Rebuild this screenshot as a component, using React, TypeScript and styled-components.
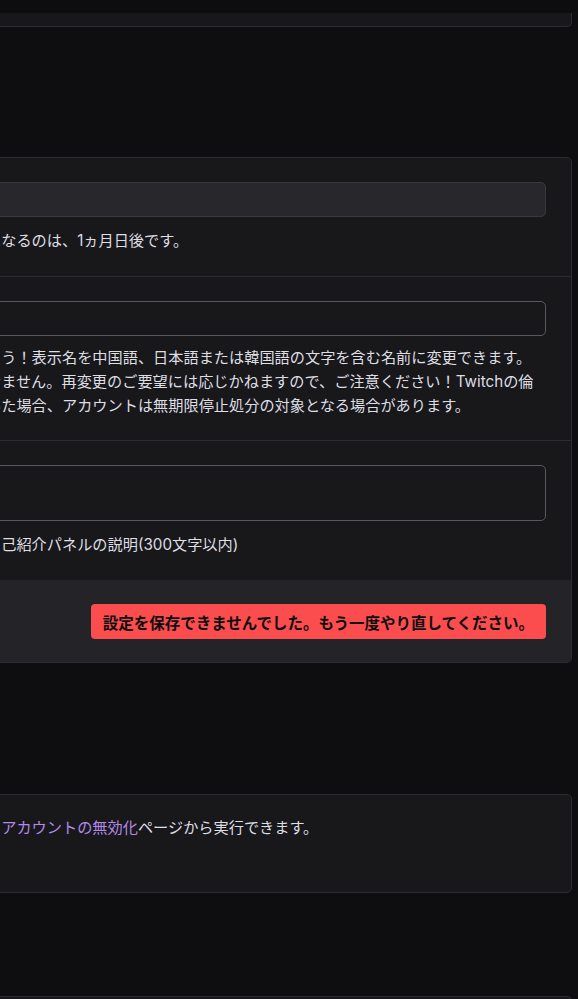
import React from "react";
import styled, { createGlobalStyle } from "styled-components";

const GlobalStyle = createGlobalStyle`
  html, body {
    margin: 0;
    padding: 0;
    background: #0e0e10;
    overflow: hidden;
  }
  body {
    font-family: Inter, "Noto Sans CJK JP", "Noto Sans", sans-serif;
    color: #dedee3;
    -webkit-font-smoothing: antialiased;
  }
`;

const Page = styled.div`
  width: 578px;
  height: 999px;
  overflow: hidden;
`;

/* the settings column runs wider than the window on its left side */
const Column = styled.div`
  margin-left: -40px;
  width: 612px;
  display: flex;
  flex-direction: column;
`;

const TopStrip = styled.div`
  height: 13px;
  background: #0d0d0f;
`;

const CardTail = styled.div`
  height: 13px;
  background: #18181b;
  border: 1px solid #2b2b31;
  border-top: none;
  border-radius: 0 0 5px 5px;
`;

const Card = styled.section<{ $gap: number }>`
  margin-top: ${(p) => p.$gap}px;
  background: #18181b;
  border: 1px solid #2b2b31;
  border-radius: 5px;
  overflow: hidden;
`;

const Row = styled.div<{ $gap: number; $bottom: number }>`
  display: flex;
  flex-direction: column;
  gap: ${(p) => p.$gap}px;
  padding: 24px 25px ${(p) => p.$bottom}px;
  & + & {
    border-top: 1px solid #2c2c32;
  }
`;

const Field = styled.div<{ $disabled?: boolean; $tall?: boolean }>`
  box-sizing: border-box;
  height: ${(p) => (p.$tall ? 56 : 35)}px;
  border-radius: 5px;
  background: ${(p) => (p.$disabled ? "#27272c" : "#18181b")};
  border: 1px solid ${(p) => (p.$disabled ? "#38383e" : "#57575f")};
`;

const Help = styled.p`
  margin: 0;
  font-size: 15.2px;
  line-height: 24px;
  color: #dedee3;
  white-space: nowrap;
`;

const Footer = styled.div`
  display: flex;
  justify-content: flex-end;
  padding: 24px 25px 23px;
  background: #232328;
`;

const ErrorNotice = styled.div`
  display: inline-flex;
  align-items: center;
  height: 35px;
  padding: 0 12px;
  border-radius: 4px;
  background: #fb4d4d;
  color: #0e0e10;
  font-size: 15.5px;
  font-weight: 700;
  white-space: nowrap;
`;

const InfoBody = styled.div`
  min-height: 52px;
  padding: 21px 25px 24px;
`;

const Link = styled.a`
  color: #b38ae9;
  text-decoration: none;
`;

const NextCard = styled.div`
  margin-top: 103px;
  height: 20px;
  background: #18181b;
  border: 1px solid #2b2b31;
  border-bottom: none;
  border-radius: 5px 5px 0 0;
`;

export default function App() {
  return (
    <>
      <GlobalStyle />
      <Page>
        <TopStrip />
        <Column>
          <CardTail />

          <Card $gap={130}>
            <Row $gap={12} $bottom={23}>
              <Field $disabled />
              <Help>になるのは、1ヵ月日後です。</Help>
            </Row>
            <Row $gap={10} $bottom={22}>
              <Field />
              <Help>
                よう！表示名を中国語、日本語または韓国語の文字を含む名前に変更できます。
                <br />
                せません。再変更のご要望には応じかねますので、ご注意ください！Twitchの倫
                <br />
                いた場合、アカウントは無期限停止処分の対象となる場合があります。
              </Help>
            </Row>
            <Row $gap={12} $bottom={23}>
              <Field $tall />
              <Help>自己紹介パネルの説明(300文字以内)</Help>
            </Row>
            <Footer>
              <ErrorNotice>設定を保存できませんでした。もう一度やり直してください。</ErrorNotice>
            </Footer>
          </Card>

          <Card $gap={131}>
            <InfoBody>
              <Help>
                、<Link href="#">アカウントの無効化</Link>ページから実行できます。
              </Help>
            </InfoBody>
          </Card>

          <NextCard />
        </Column>
      </Page>
    </>
  );
}
